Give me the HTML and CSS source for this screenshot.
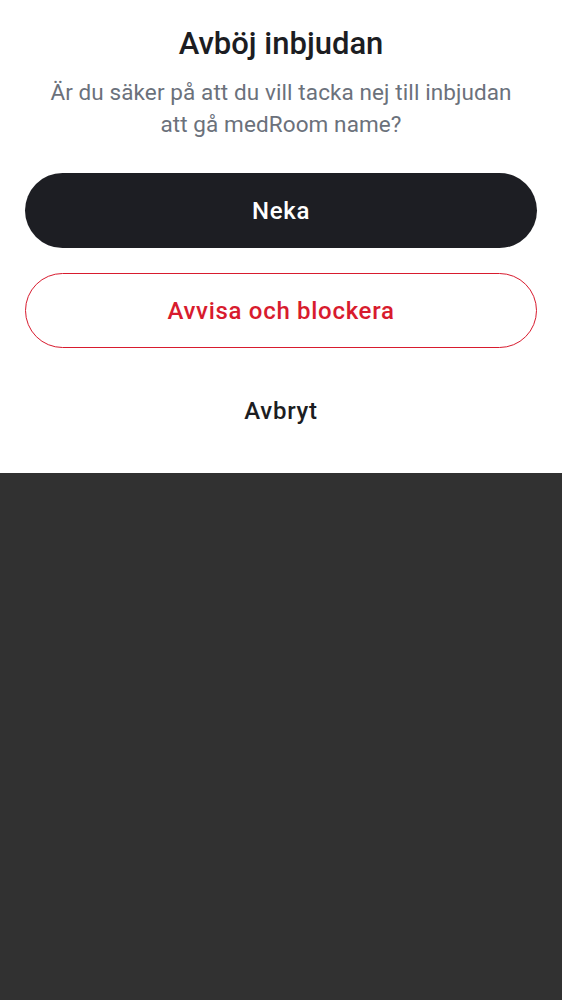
FILE: index.html
```html
<!DOCTYPE html>
<html lang="sv">
<head>
<meta charset="utf-8">
<link rel="stylesheet" href="styles.css">
</head>
<body>
<div class="sheet">
  <h1 class="title">Avböj inbjudan</h1>
  <p class="subtitle">Är du säker på att du vill tacka nej till inbjudan<br>att gå medRoom name?</p>
  <div class="actions">
    <button class="btn btn-primary">Neka</button>
    <button class="btn btn-danger">Avvisa och blockera</button>
    <button class="btn btn-text">Avbryt</button>
  </div>
</div>
</body>
</html>
```
FILE: styles.css
```css
html, body {
  margin: 0;
  padding: 0;
  height: 100%;
  background: #313131;
  font-family: Roboto, "Noto Sans", sans-serif;
}
.sheet {
  background: #ffffff;
  padding: 26px 25px 25px;
  display: flex;
  flex-direction: column;
  align-items: stretch;
}
.title {
  margin: 0;
  text-align: center;
  font-size: 31px;
  line-height: 36px;
  font-weight: 500;
  color: #1c1d22;
}
.subtitle {
  margin: 14px 0 0;
  text-align: center;
  font-size: 22.5px;
  line-height: 32px;
  font-weight: 400;
  letter-spacing: 0.1px;
  color: #6b717b;
}
.actions {
  margin-top: 33px;
  display: flex;
  flex-direction: column;
  gap: 25px;
}
.btn {
  height: 75px;
  border-radius: 38px;
  font-family: Roboto, "Noto Sans", sans-serif;
  font-size: 24px;
  letter-spacing: 0.7px;
  font-weight: 500;
  border: none;
  background: transparent;
  cursor: pointer;
  padding: 0;
}
.btn-primary {
  background: #1d1e23;
  color: #ffffff;
}
.btn-danger {
  background: #ffffff;
  border: 1px solid #d81b2e;
  color: #d81b2e;
}
.btn-text {
  color: #1c1d22;
}
```
